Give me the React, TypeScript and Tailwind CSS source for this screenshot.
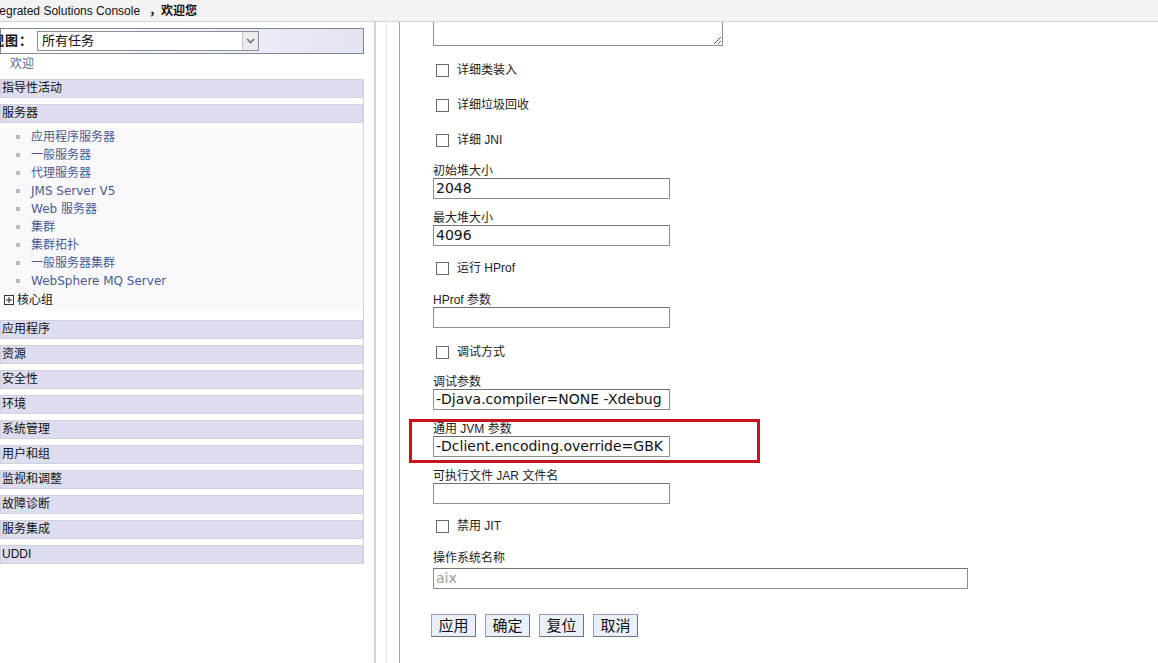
import { ReactNode } from "react";

const servers = [
  "应用程序服务器",
  "一般服务器",
  "代理服务器",
  "JMS Server V5",
  "Web 服务器",
  "集群",
  "集群拓扑",
  "一般服务器集群",
  "WebSphere MQ Server",
];

const sections = ["应用程序", "资源", "安全性", "环境", "系统管理", "用户和组", "监视和调整", "故障诊断", "服务集成", "UDDI"];

function NavRow({ label, className = "" }: { label: string; className?: string }) {
  return (
    <div className={`h-[19px] border border-[#cfd1e2] bg-[#dcdef0] pl-[1px] text-[12px] leading-[17px] text-[#111] ${className}`}>
      {label}
    </div>
  );
}

function Check({ label, className = "" }: { label: string; className?: string }) {
  return (
    <div className={`flex h-[16px] items-center gap-[8px] pl-[3px] text-[12px] text-[#222] ${className}`}>
      <span className="h-[13px] w-[13px] border border-[#6a6a6a] bg-white" />
      <span>{label}</span>
    </div>
  );
}

function Label({ children, className = "" }: { children: ReactNode; className?: string }) {
  return <div className={`h-[13px] text-[12px] leading-[13px] text-[#222] ${className}`}>{children}</div>;
}

function Field({ value = "", w = "w-[237px]", muted = false }: { value?: string; w?: string; muted?: boolean }) {
  return (
    <div
      className={`h-[21px] ${w} overflow-hidden whitespace-nowrap border border-[#8a8f96] border-t-[#6f7378] bg-white pl-[2px] font-['DejaVu_Sans',sans-serif] text-[14px] leading-[19px] ${
        muted ? "text-[#9a9a9a] text-[13px]" : "text-[#111]"
      }`}
    >
      {value}
    </div>
  );
}

export default function App() {
  return (
    <div className="flex h-[663px] w-[1158px] flex-col overflow-hidden bg-white font-['Liberation_Sans','Noto_Sans_CJK_SC',sans-serif]">
      <header className="flex h-[22px] shrink-0 items-center overflow-hidden border-b border-[#d6d6d6] bg-[#f3f3f3] text-[12px] text-[#111]">
        <span className="-ml-[14px] whitespace-nowrap">Integrated Solutions Console</span>
        <span className="ml-[9px] font-bold">，欢迎您</span>
      </header>

      <div className="flex min-h-0 flex-1">
        {/* navigation */}
        <aside className="w-[364px] shrink-0">
          <div className="mt-[6px] flex h-[26px] items-center border border-[#7d8895] bg-gradient-to-r from-white via-[#f2f2fa] to-[#e2e3f3]">
            <span className="-ml-[10px] text-[13px] font-bold tracking-[1px] text-[#111]">视图：</span>
            <div className="ml-[4px] flex h-[20px] w-[222px] items-center justify-between border border-[#8a8f96] bg-white">
              <span className="pl-[4px] text-[13px] text-[#111]">所有任务</span>
              <span className="flex h-[18px] w-[16px] items-center justify-center border-l border-[#c4c4c4] bg-[#ececec]">
                <svg width="9" height="6" viewBox="0 0 9 6">
                  <path d="M1 1l3.5 3.5L8 1" fill="none" stroke="#6b7280" strokeWidth="1.6" />
                </svg>
              </span>
            </div>
          </div>
          <div className="h-[19px] pl-[10px] text-[12px] leading-[21px] text-[#5a6794]">欢迎</div>
          <div className="border-r border-[#d2d3dd]">
            <NavRow label="指导性活动" className="mt-[6px]" />
            <NavRow label="服务器" className="mt-[6px]" />
            <ul className="mt-[5px] bg-[#f9f9fc] font-['DejaVu_Sans','Noto_Sans_CJK_SC',sans-serif] text-[12px] text-[#4b5a93]">
              {servers.map((s) => (
                <li key={s} className="flex h-[18px] items-center">
                  <span className="ml-[16px] h-[4px] w-[4px] bg-[#b9bac4]" />
                  <span className="ml-[11px]">{s}</span>
                </li>
              ))}
              <li className="flex h-[20px] items-center pl-[4px] font-['Liberation_Sans','Noto_Sans_CJK_SC',sans-serif] text-[#111]">
                <span className="mr-[3px] flex h-[10px] w-[10px] items-center justify-center border border-[#333]">
                  <svg width="8" height="8" viewBox="0 0 8 8">
                    <path d="M1 4h6M4 1v6" stroke="#222" strokeWidth="1" />
                  </svg>
                </span>
                核心组
              </li>
            </ul>
            <div className="h-[10px]" />
            {sections.map((s, i) => (
              <NavRow key={s} label={s} className={i === 0 ? "" : "mt-[6px]"} />
            ))}
          </div>
        </aside>

        {/* frame borders */}
        <div className="flex w-[36px] shrink-0">
          <div className="ml-[10px] w-[2px] bg-[#d3d3d3]" />
          <div className="ml-[10px] w-px bg-[#e2e2e2]" />
          <div className="ml-[12px] w-px bg-[#a9a9a9]" />
        </div>

        {/* form */}
        <main className="flex flex-col pl-[33px]">
          <textarea
            readOnly
            className="h-[24px] w-[290px] resize border border-t-0 border-[#8a8f96] bg-white outline-none"
          />
          <Check label="详细类装入" className="mt-[16px]" />
          <Check label="详细垃圾回收" className="mt-[19px]" />
          <Check label="详细 JNI" className="mt-[19px]" />

          <Label className="mt-[17px]">初始堆大小</Label>
          <Field value="2048" />
          <Label className="mt-[13px]">最大堆大小</Label>
          <Field value="4096" />

          <Check label="运行 HProf" className="mt-[14px]" />
          <Label className="mt-[18px]">HProf 参数</Label>
          <Field />

          <Check label="调试方式" className="mt-[16px]" />
          <Label className="mt-[16px]">调试参数</Label>
          <Field value="-Djava.compiler=NONE -Xdebug" />

          <div className="-ml-[24px] mt-[9px] w-[351px] border-[3px] border-[#c8141c] pb-[3px] pl-[21px]">
            <Label className="mt-[1px]">通用 JVM 参数</Label>
            <Field value="-Dclient.encoding.override=GBK" />
          </div>

          <Label className="mt-[7px]">可执行文件 JAR 文件名</Label>
          <Field />

          <Check label="禁用 JIT" className="mt-[14px]" />
          <Label className="mt-[18px]">操作系统名称</Label>
          <div className="mt-[3px]">
            <Field value="aix" w="w-[535px]" muted />
          </div>

          <div className="-ml-[2px] mt-[25px] flex gap-[9px]">
            {["应用", "确定", "复位", "取消"].map((b) => (
              <button
                key={b}
                className="h-[23px] w-[45px] border border-[#9aa0aa] border-b-[#6f747c] border-r-[#6f747c] bg-[#eaf0fa] text-[15px] leading-[20px] text-[#111]"
              >
                {b}
              </button>
            ))}
          </div>
        </main>
      </div>
    </div>
  );
}
